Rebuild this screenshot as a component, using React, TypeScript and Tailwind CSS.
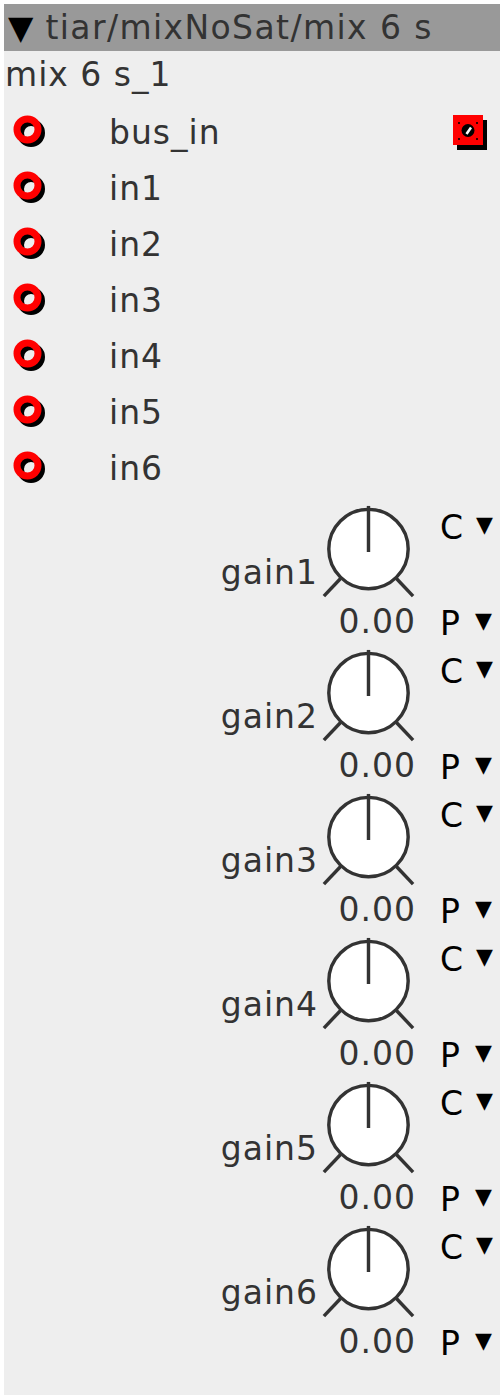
const inlets = ['bus_in', 'in1', 'in2', 'in3', 'in4', 'in5', 'in6'];
const gains = ['gain1', 'gain2', 'gain3', 'gain4', 'gain5', 'gain6'];

const InletIcon = () => (
  <svg width="40" height="40" viewBox="0 0 40 40" className="ml-[8px] shrink-0">
    <circle cx="19" cy="20" r="10.5" fill="none" stroke="#000" strokeWidth="7" />
    <circle cx="15.5" cy="16.5" r="10.5" fill="none" stroke="#ff0000" strokeWidth="7" />
  </svg>
);

const OutletIcon = () => (
  <svg width="36" height="38" viewBox="0 0 36 38" className="ml-auto mr-[12px] shrink-0">
    <rect x="5" y="6" width="30" height="30" fill="#000" />
    <rect x="1" y="1" width="30" height="30" fill="#ff0000" />
    <circle cx="16" cy="16.5" r="6.5" fill="#000" />
    <path d="M14.5 20 L19 13.5" stroke="#fff" strokeWidth="2.5" />
    <rect x="6" y="8" width="2" height="2" fill="#300" />
    <rect x="24" y="8" width="2" height="2" fill="#300" />
    <rect x="6" y="24" width="2" height="2" fill="#300" />
    <rect x="24" y="24" width="2" height="2" fill="#300" />
  </svg>
);

const Knob = () => (
  <svg width="100" height="100" viewBox="0 0 100 100" className="mt-[6px]">
    <line x1="5" y1="95" x2="22" y2="77" stroke="#333" strokeWidth="3.5" />
    <line x1="79" y1="77" x2="96" y2="95" stroke="#333" strokeWidth="3.5" />
    <circle cx="50.5" cy="47" r="40.5" fill="#fff" stroke="#333" strokeWidth="3.5" />
    <line x1="50.5" y1="3" x2="50.5" y2="50" stroke="#333" strokeWidth="3.5" />
  </svg>
);

const GainRow = ({ name }: { name: string }) => (
  <div className="flex h-[144px]">
    <div className="flex-1 pt-[57px] text-right text-[#333]">{name}</div>
    <div className="w-[100px] shrink-0 flex flex-col">
      <Knob />
      <div className="mt-[2px] text-right pr-[2px] text-[#333]">0.00</div>
    </div>
    <div className="ml-[22px] w-[60px] shrink-0 flex flex-col text-black">
      <div className="mt-[12px] flex items-center">
        <span>C</span>
        <span className="ml-[12px] text-[22px] leading-none mt-[-6px]">▼</span>
      </div>
      <div className="mt-[58px] flex items-center">
        <span>P</span>
        <span className="ml-[14px] text-[22px] leading-none mt-[-6px]">▼</span>
      </div>
    </div>
  </div>
);

export default function App() {
  return (
    <div
      className="w-[504px] h-[1400px] bg-white p-[4px] text-[33px] leading-[38px] tracking-[1px]"
      style={{ fontFamily: '"DejaVu Sans", sans-serif' }}
    >
      <div className="w-[496px] h-[1391px] bg-[#eeeeee]">
        {/* Title bar */}
        <div className="h-[47px] bg-[#999999] flex items-center pl-[4px] whitespace-nowrap">
          <span className="text-black">▼</span>
          <span className="ml-[11px] text-[#333] tracking-[1.4px]">tiar/mixNoSat/mix 6 s</span>
        </div>

        {/* Instance name */}
        <div className="h-[54px] pt-[5px] pl-[1px] text-[#333]">mix 6 s_1</div>

        {/* Inlets */}
        {inlets.map((name, i) => (
          <div key={name} className="h-[56px] flex items-center">
            <InletIcon />
            <span className="ml-[57px] text-[#333]">{name}</span>
            {i === 0 && <OutletIcon />}
          </div>
        ))}

        {/* Parameters */}
        {gains.map((g) => (
          <GainRow key={g} name={g} />
        ))}
      </div>
    </div>
  );
}
